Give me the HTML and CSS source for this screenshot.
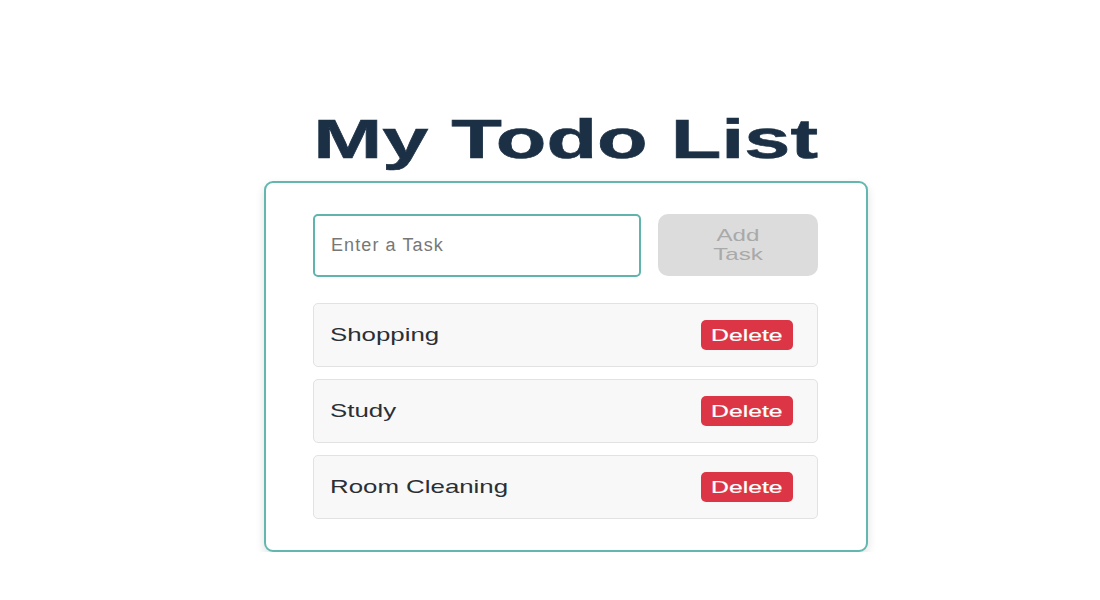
FILE: index.html
```html
<!DOCTYPE html>
<html lang="en">
<head>
<meta charset="utf-8">
<title>My Todo List</title>
<link rel="stylesheet" href="styles.css">
</head>
<body>
<main class="app">
  <h1 class="title"><span class="title-text">My Todo List</span></h1>
  <section class="card">
    <form class="add-row" onsubmit="return false">
      <input class="task-input" type="text" placeholder="Enter a Task">
      <button class="add-btn" type="button" disabled><span class="add-text">Add Task</span></button>
    </form>
    <ul class="tasks">
      <li class="task"><span class="task-name">Shopping</span><button class="del-btn" type="button"><span class="del-text">Delete</span></button></li>
      <li class="task"><span class="task-name">Study</span><button class="del-btn" type="button"><span class="del-text">Delete</span></button></li>
      <li class="task"><span class="task-name">Room Cleaning</span><button class="del-btn" type="button"><span class="del-text">Delete</span></button></li>
    </ul>
  </section>
</main>
</body>
</html>
```

FILE: styles.css
```css
* { box-sizing: border-box; }

html, body {
  margin: 0;
  padding: 0;
  background: #ffffff;
  font-family: "Liberation Sans", Arial, sans-serif;
}

.app {
  width: 604px;
  margin: 0 0 0 264px;
  padding-top: 107px;
}

.title {
  margin: 0 0 10px;
  font-size: 56px;
  line-height: 64px;
  font-weight: 700;
  color: #1c3045;
  text-align: center;
  -webkit-text-stroke: 0.6px #1c3045;
}

.title-text {
  display: inline-block;
  transform: scaleX(1.48);
  transform-origin: center;
}

.card {
  border: 2px solid #62b7b1;
  border-radius: 9px;
  padding: 31px 48px 31px 47px;
  background: #ffffff;
  box-shadow: 0 4px 10px rgba(0, 0, 0, 0.12);
}

.add-row {
  display: flex;
  gap: 17px;
  margin: 0 0 26px;
}

.task-input {
  width: 328px;
  height: 63px;
  border: 2px solid #5fb4ae;
  border-radius: 5px;
  padding: 0 16px;
  font-family: "Liberation Sans", Arial, sans-serif;
  font-size: 18px;
  letter-spacing: 1.1px;
  color: #333;
  background: #fff;
  outline: none;
}

.task-input::placeholder {
  color: #777777;
  letter-spacing: 1.1px;
}

.add-btn {
  flex: 1;
  height: 62px;
  border: none;
  border-radius: 10px;
  background: #dcdcdc;
  color: #a9a9a9;
  font-family: "Liberation Sans", Arial, sans-serif;
  font-size: 17px;
  line-height: 19px;
  padding: 0;
  display: flex;
  align-items: center;
  justify-content: center;
}

.add-text {
  display: inline-block;
  max-width: 40px;
  text-align: center;
  transform: scaleX(1.42);
  transform-origin: center;
}

.tasks {
  list-style: none;
  margin: 0;
  padding: 0;
  display: flex;
  flex-direction: column;
  gap: 12px;
}

.task {
  height: 64px;
  display: flex;
  align-items: center;
  justify-content: space-between;
  padding: 0 24px 0 16px;
  background: #f8f8f8;
  border: 1px solid #e2e2e2;
  border-radius: 5px;
}

.task-name {
  display: inline-block;
  font-size: 19px;
  color: #2a2f36;
  transform: scaleX(1.36);
  transform-origin: left center;
}

.del-btn {
  width: 92px;
  height: 30px;
  border: none;
  border-radius: 5px;
  background: #dc3545;
  color: #ffffff;
  font-family: "Liberation Sans", Arial, sans-serif;
  font-size: 16.5px;
  padding: 0;
  display: flex;
  align-items: center;
  justify-content: center;
}

.del-text {
  display: inline-block;
  transform: scaleX(1.5);
  transform-origin: center;
  -webkit-text-stroke: 0.2px #ffffff;
}
```
